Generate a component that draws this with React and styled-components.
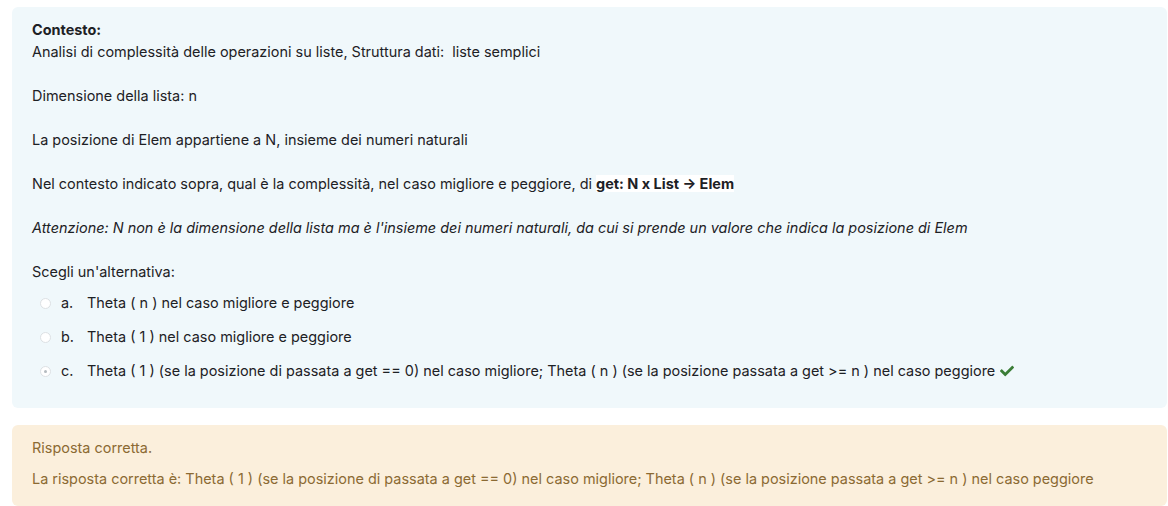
import React from 'react';
import styled, { createGlobalStyle } from 'styled-components';

const GlobalStyle = createGlobalStyle`
  body {
    margin: 0;
    background: #fff;
    font-family: Inter, Roboto, "Liberation Sans", Arial, sans-serif;
    font-size: 14.45px;
    line-height: 22px;
    color: #1d2125;
  }
`;

const Page = styled.div`
  display: flex;
  flex-direction: column;
  gap: 17px;
  padding: 7px 1px 0 12px;
`;

const Formulation = styled.div`
  background: #f0f8fb;
  border-radius: 6px;
  padding: 12px 20px 26px;
`;

const Para = styled.p`
  margin: 0 0 22px;
  font-style: ${(p) => (p.italic ? 'italic' : 'normal')};
`;

const Heading = styled.div`
  font-weight: 700;
`;

const Highlight = styled.strong`
  background: #fff;
  font-weight: 700;
`;

const Options = styled.div`
  display: flex;
  flex-direction: column;
  gap: 12px;
  margin-top: -13px;
`;

const Option = styled.div`
  display: flex;
  align-items: center;
  padding-left: 8px;
`;

const Radio = styled.span`
  width: 11px;
  height: 11px;
  border-radius: 50%;
  border: 1px solid #dde1e4;
  background: #fff;
  box-sizing: border-box;
  display: inline-flex;
  align-items: center;
  justify-content: center;
  margin-right: 10px;

  &::after {
    content: '';
    width: 3px;
    height: 3px;
    border-radius: 50%;
    background: ${(p) => (p.checked ? '#b5bbc0' : 'transparent')};
  }
`;

const Letter = styled.span`
  width: 26px;
`;

const Check = styled.svg`
  width: 14px;
  height: 14px;
  margin-left: 5px;
  vertical-align: -2px;
`;

const Feedback = styled.div`
  background: #fbefdc;
  border-radius: 6px;
  color: #8b6a33;
  padding: 12px 20px 16px;
  display: flex;
  flex-direction: column;
  gap: 9px;
`;

const options = [
  { letter: 'a.', text: 'Theta ( n ) nel caso migliore e peggiore' },
  { letter: 'b.', text: 'Theta ( 1 ) nel caso migliore e peggiore' },
  {
    letter: 'c.',
    text: 'Theta ( 1 ) (se la posizione di passata a get == 0) nel caso migliore; Theta ( n ) (se la posizione passata a get >= n ) nel caso peggiore',
    checked: true,
  },
];

export default function App() {
  return (
    <Page>
      <GlobalStyle />
      <Formulation>
        <Heading>Contesto:</Heading>
        <Para>Analisi di complessità delle operazioni su liste, Struttura dati:&nbsp; liste semplici</Para>
        <Para>Dimensione della lista: n</Para>
        <Para>La posizione di Elem appartiene a N, insieme dei numeri naturali</Para>
        <Para>
          Nel contesto indicato sopra, qual è la complessità, nel caso migliore e peggiore, di{' '}
          <Highlight>get: N x List → Elem</Highlight>
        </Para>
        <Para italic>
          Attenzione: N non è la dimensione della lista ma è l'insieme dei numeri naturali, da cui si prende un valore che indica la posizione di Elem
        </Para>
        <Para>Scegli un'alternativa:</Para>
        <Options>
          {options.map((o) => (
            <Option key={o.letter}>
              <Radio checked={o.checked} />
              <Letter>{o.letter}</Letter>
              <span>
                {o.text}
                {o.checked && (
                  <Check viewBox="0 0 512 512">
                    <path
                      fill="#3a7d36"
                      d="M173.9 439.4l-166.4-166.4c-10-10-10-26.2 0-36.2l36.2-36.2c10-10 26.2-10 36.2 0L192 312.7 432.1 72.6c10-10 26.2-10 36.2 0l36.2 36.2c10 10 10 26.2 0 36.2L210.1 439.4c-10 10-26.2 10-36.2 0z"
                    />
                  </Check>
                )}
              </span>
            </Option>
          ))}
        </Options>
      </Formulation>
      <Feedback>
        <div>Risposta corretta.</div>
        <div>
          La risposta corretta è: Theta ( 1 ) (se la posizione di passata a get == 0) nel caso migliore; Theta ( n ) (se la posizione passata a get &gt;= n ) nel caso peggiore
        </div>
      </Feedback>
    </Page>
  );
}
